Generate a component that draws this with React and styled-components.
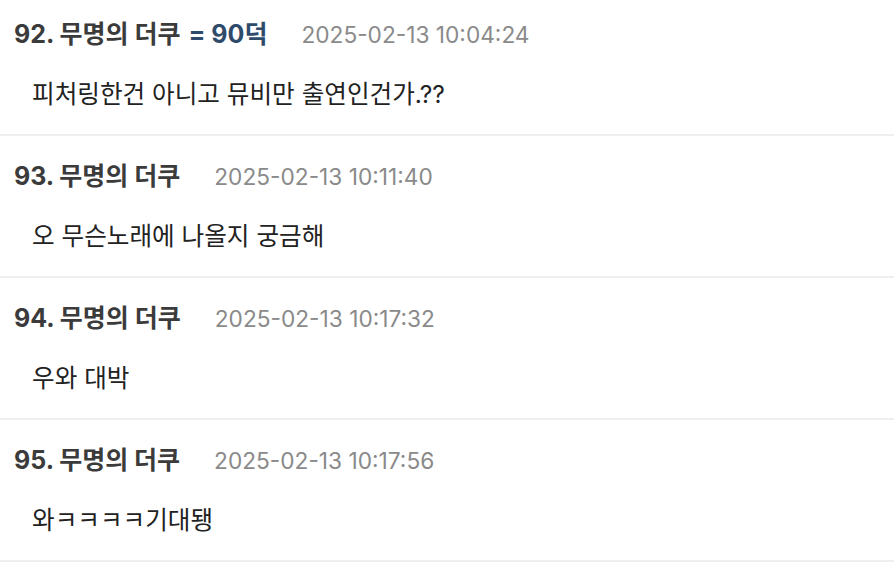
import React from "react";
import styled, { createGlobalStyle } from "styled-components";

const GlobalStyle = createGlobalStyle`
  html, body {
    margin: 0;
    padding: 0;
    background: #ffffff;
    overflow: hidden;
  }
  body {
    font-family: Inter, "Noto Sans CJK KR", sans-serif;
  }
`;

const List = styled.div`
  display: flex;
  flex-direction: column;
  margin-top: -6px;
`;

const Item = styled.div`
  display: flex;
  flex-direction: column;
  gap: 30px;
  padding: 25px 14px 25px;
  border-bottom: 2px solid #eeeeee;
`;

const Header = styled.div`
  display: flex;
  align-items: baseline;
  height: 30px;
  line-height: 30px;
  white-space: nowrap;
`;

const Author = styled.span`
  font-size: 25px;
  font-weight: 700;
  color: #3b3b3b;
`;

const Badge = styled.span`
  font-size: 25px;
  font-weight: 700;
  color: #2f4b6c;
  margin-left: 8px;
`;

const Time = styled.span`
  font-size: 22.7px;
  color: #8a8a8a;
  margin-left: 34px;
`;

const Body = styled.div`
  font-size: 24.6px;
  line-height: 30px;
  color: #222222;
  padding-left: 18px;
  white-space: nowrap;
`;

const comments = [
  { no: 92, badge: "= 90덕", time: "2025-02-13 10:04:24", text: "피처링한건 아니고 뮤비만 출연인건가.??" },
  { no: 93, time: "2025-02-13 10:11:40", text: "오 무슨노래에 나올지 궁금해" },
  { no: 94, time: "2025-02-13 10:17:32", text: "우와 대박" },
  { no: 95, time: "2025-02-13 10:17:56", text: "와ㅋㅋㅋㅋ기대됑" },
];

export default function App() {
  return (
    <>
      <GlobalStyle />
      <List>
        {comments.map((c) => (
          <Item key={c.no}>
            <Header>
              <Author>{c.no}. 무명의 더쿠</Author>
              {c.badge && <Badge>{c.badge}</Badge>}
              <Time>{c.time}</Time>
            </Header>
            <Body>{c.text}</Body>
          </Item>
        ))}
      </List>
    </>
  );
}
